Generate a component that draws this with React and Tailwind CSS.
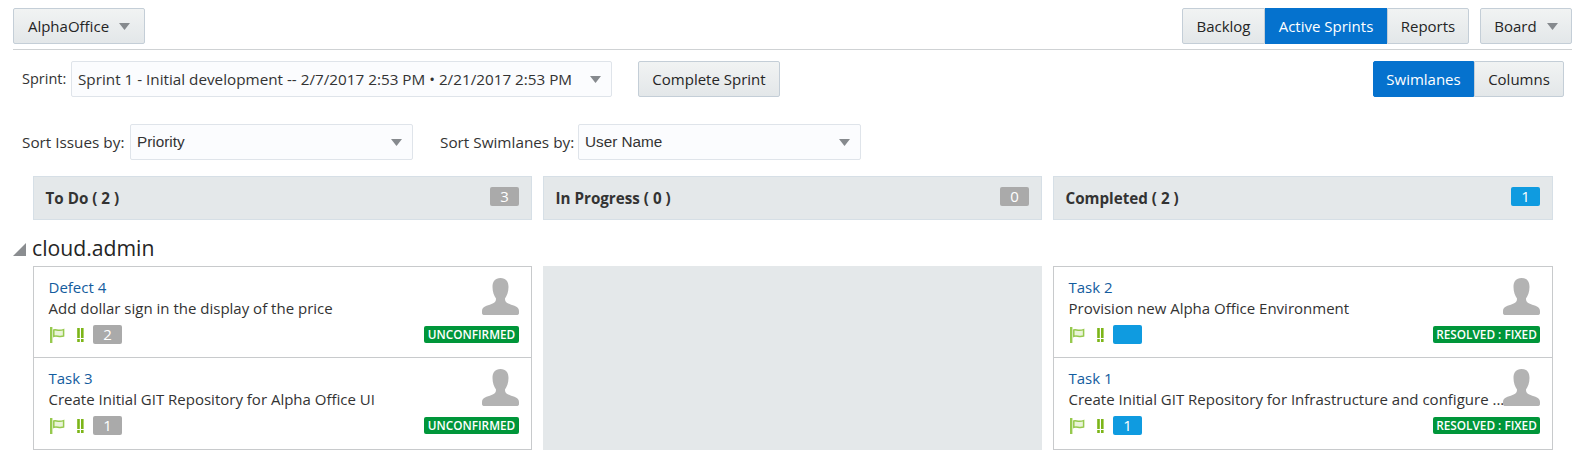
import React from 'react';

const ui = { fontFamily: '"Open Sans", "Noto Sans", sans-serif' };

const btn = 'flex items-center justify-center border border-[#c4ced7] bg-gradient-to-b from-[#f1f3f3] to-[#e3e7e9] text-[15px] text-[#252525]';
const active = 'flex items-center justify-center border border-[#0572ce] bg-[#0572ce] text-[15px] text-white';

function Caret() {
    return (
        <svg width="11" height="7" viewBox="0 0 11 7" className="shrink-0">
            <polygon points="0,0 11,0 5.5,7" fill="#868a8e" />
        </svg>
    );
}

function Flag() {
    return (
        <svg width="15" height="16" viewBox="0 0 15 16" className="shrink-0">
            <rect x="0" y="0" width="2.4" height="16" fill="#96c94e" />
            <path d="M3.8 3 C6 2 8 4.4 13.6 2.6 L13.6 9 C9 10.4 7 8.2 3.8 9.4 Z" fill="#eaf4d8" stroke="#96c94e" strokeWidth="1.5" />
        </svg>
    );
}

function Bang() {
    return (
        <svg width="7" height="14" viewBox="0 0 7 14" className="shrink-0">
            <rect x="0.2" y="0" width="2.6" height="10" fill="#7cb518" />
            <rect x="0.2" y="11" width="2.6" height="3" fill="#7cb518" />
            <rect x="4" y="0" width="2.6" height="10" fill="#7cb518" />
            <rect x="4" y="11" width="2.6" height="3" fill="#7cb518" />
        </svg>
    );
}

function Avatar() {
    return (
        <svg width="37" height="37" viewBox="0 0 37 37">
            <path
                d="M18.5 0 C24 0 26.5 3.5 26.5 9 C26.5 14 24.8 18 23 20.5 C23 23.5 24 24.6 27.5 26 C32 27.8 37 28.5 37 33 L37 35 C37 36.4 36 37 34.5 37 L2.5 37 C1 37 0 36.4 0 35 L0 33 C0 28.5 5 27.8 9.5 26 C13 24.6 14 23.5 14 20.5 C12.2 18 10.5 14 10.5 9 C10.5 3.5 13 0 18.5 0 Z"
                fill="#b3b3b3"
            />
        </svg>
    );
}

function Count({ value, blue }) {
    return (
        <span
            className={`flex h-[19px] w-[29px] items-center justify-center rounded-[2px] text-[15px] text-white ${blue ? 'bg-[#0f9be0]' : 'bg-[#aaaaaa]'}`}
        >
            {value}
        </span>
    );
}

function Card({ title, text, count, blue, status, statusWidth, last }) {
    return (
        <div className={`relative h-[91px] pl-[15px] pr-[12px] ${last ? '' : 'border-b border-[#c8cacc]'}`}>
            <div className="-ml-[0.5px] pt-[10px] text-[15px] leading-[21px] text-[#145c9e]">{title}</div>
            <div className="-ml-[0.5px] whitespace-nowrap text-[15px] leading-[21px] text-[#333]">{text}</div>
            <div className="mt-[6px] flex items-center">
                <div className="ml-[1px] flex w-[27px] items-center">
                    <Flag />
                </div>
                <div className="flex w-[16px] items-center">
                    <Bang />
                </div>
                <Count value={count} blue={blue} />
            </div>
            <div className="absolute right-[12px] top-[11px]">
                <Avatar />
            </div>
            <div
                className={`absolute right-[12px] top-[59px] flex h-[17px] items-center justify-center rounded-[2px] bg-[#00963a] text-[11.8px] font-semibold text-white ${statusWidth}`}
            >
                {status}
            </div>
        </div>
    );
}

function Select({ width, textClass, children }) {
    return (
        <div className={`flex h-[36px] items-center justify-between rounded-[2px] border border-[#dfe4ea] bg-[#fbfcfe] pl-[6px] pr-[10px] text-[#333] ${width}`}>
            <span className={textClass}>{children}</span>
            <Caret />
        </div>
    );
}

const columns = [
    { name: 'To Do ( 2 )', count: '3' },
    { name: 'In Progress ( 0 )', count: '0' },
    { name: 'Completed ( 2 )', count: '1', blue: true },
];

export default function App() {
    return (
        <div style={ui} className="h-[476px] w-[1584px] overflow-hidden bg-white text-[15px] text-[#333]">
            {/* top toolbar */}
            <div className="mx-[13px] mt-[8px] flex h-[42px] w-[1559px] items-start justify-between border-b border-[#cfd2d4] pb-[5px]">
                <button className={`${btn} h-[36px] w-[132px] gap-[10px] rounded-[2px]`}>
                    AlphaOffice <Caret />
                </button>
                <div className="flex">
                    <button className={`${btn} h-[36px] w-[83px] rounded-l-[2px]`}>Backlog</button>
                    <button className={`${active} h-[36px] w-[122px]`}>Active Sprints</button>
                    <button className={`${btn} h-[36px] w-[82px] rounded-r-[2px]`}>Reports</button>
                    <button className={`${btn} ml-[11px] h-[36px] w-[92px] gap-[10px] rounded-[2px]`}>
                        Board <Caret />
                    </button>
                </div>
            </div>

            {/* sprint row */}
            <div className="ml-[22px] mr-[20px] mt-[11px] flex h-[36px] items-center">
                <span className="w-[49px] text-[14.5px]">Sprint:</span>
                <Select width="w-[541px]" textClass="text-[15.26px]">
                    Sprint 1 - Initial development -- 2/7/2017 2:53 PM • 2/21/2017 2:53 PM
                </Select>
                <button className={`${btn} ml-[26px] h-[36px] w-[142px] rounded-[2px]`}>Complete Sprint</button>
                <div className="ml-auto flex">
                    <button className={`${active} h-[36px] w-[101px] rounded-l-[2px]`}>Swimlanes</button>
                    <button className={`${btn} h-[36px] w-[90px] rounded-r-[2px]`}>Columns</button>
                </div>
            </div>

            {/* sort row */}
            <div className="ml-[22px] mt-[27px] flex h-[36px] items-center">
                <span className="w-[108px] text-[15.3px]">Sort Issues by:</span>
                <Select width="w-[283px]" textClass="[font-family:'Liberation_Sans',sans-serif] text-[15.3px]">
                    Priority
                </Select>
                <span className="ml-[27px] w-[138px] text-[15.3px]">Sort Swimlanes by:</span>
                <Select width="w-[283px]" textClass="[font-family:'Liberation_Sans',sans-serif] text-[15.3px]">
                    User Name
                </Select>
            </div>

            {/* column headers */}
            <div className="ml-[33px] mt-[16px] grid grid-cols-[499px_499px_500px] gap-[11px]">
                {columns.map((col) => (
                    <div key={col.name} className="flex h-[44px] items-center justify-between border border-[#d6dfe6] bg-[#e4e8ea] pl-[11.5px] pr-[12px]">
                        <span className="text-[15.2px] font-bold text-[#333]">{col.name}</span>
                        <span className="-mt-[3px]">
                            <Count value={col.count} blue={col.blue} />
                        </span>
                    </div>
                ))}
            </div>

            {/* swimlane */}
            <div className="ml-[13px] mt-[9px] flex h-[37px] items-center">
                <svg width="13" height="13" viewBox="0 0 13 13" className="mt-[4px] shrink-0">
                    <polygon points="13,0 13,13 0,13" fill="#8a8d90" />
                </svg>
                <span className="ml-[6px] text-[21.2px] text-[#252525]">cloud.admin</span>
            </div>

            <div className="ml-[33px] grid grid-cols-[499px_499px_500px] gap-[11px]">
                <div className="h-[184px] border border-[#c8cacc]">
                    <Card title="Defect 4" text="Add dollar sign in the display of the price" count="2" status="UNCONFIRMED" statusWidth="w-[95px]" />
                    <Card title="Task 3" text="Create Initial GIT Repository for Alpha Office UI" count="1" status="UNCONFIRMED" statusWidth="w-[95px]" last />
                </div>
                <div className="h-[184px] bg-[#e4e8ea]" />
                <div className="h-[184px] border border-[#c8cacc]">
                    <Card title="Task 2" text="Provision new Alpha Office Environment" count="" blue status="RESOLVED : FIXED" statusWidth="w-[107px]" />
                    <Card title="Task 1" text="Create Initial GIT Repository for Infrastructure and configure ..." count="1" blue status="RESOLVED : FIXED" statusWidth="w-[107px]" last />
                </div>
            </div>
        </div>
    );
}
